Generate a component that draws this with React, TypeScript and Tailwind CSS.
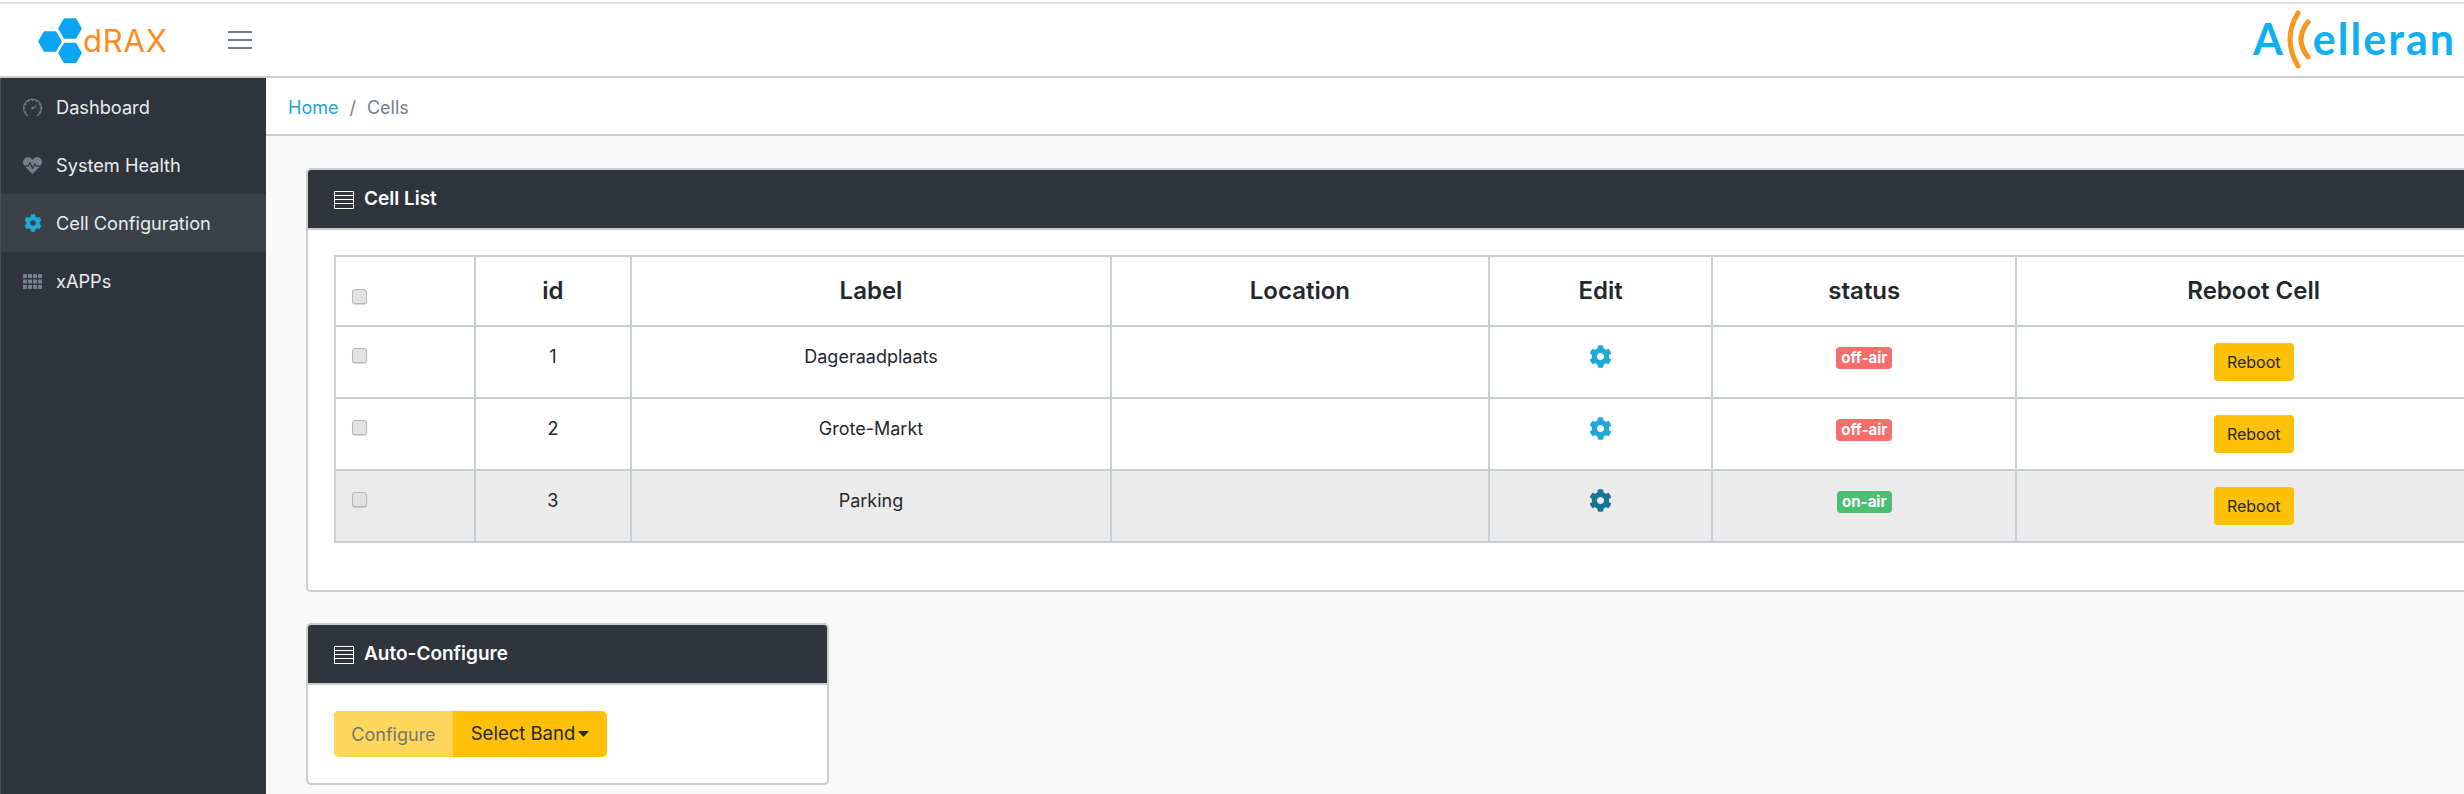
import React from "react";
import { FaCog, FaHeartbeat } from "react-icons/fa";
import { SlSpeedometer } from "react-icons/sl";

const TableIcon = () => (
  <svg width="20" height="18" viewBox="0 0 20 18" className="shrink-0">
    <path d="M.5.5h19v17H.5z" fill="none" stroke="#fff" />
    <path d="M0 4.5h20M0 8.5h20M0 12.5h20" stroke="#fff" />
  </svg>
);

const Grid = () => (
  <svg width="19" height="15" viewBox="0 0 19 15" fill="#73818f">
    {[0, 5.5, 11].map((y) => [0, 5, 10, 15].map((x) => <rect key={`${x}-${y}`} x={x} y={y} width="4" height="4" rx="0.5" />))}
  </svg>
);

const Hex = ({ x, y }: { x: number; y: number }) => (
  <polygon
    transform={`translate(${x} ${y})`}
    points="-11,0 -5.5,-9.5 5.5,-9.5 11,0 5.5,9.5 -5.5,9.5"
    fill="#0aa5f5"
    stroke="#0aa5f5"
    strokeWidth="1.5"
    strokeLinejoin="round"
  />
);

const Card = ({ title, className, children }: { title: string; className: string; children: React.ReactNode }) => (
  <section className={`shrink-0 rounded-[5px] border-2 border-[#c8ced3] bg-white ${className}`}>
    <div className="flex h-[60px] items-center gap-[10px] rounded-t-[3px] border-b-2 border-[#c8ced3] bg-[#30343c] pl-[26px] pt-[1px] text-[19px] font-semibold text-white">
      <TableIcon />
      {title}
    </div>
    {children}
  </section>
);

const widths = [140, 157, 481, 379, 224, 305, 476];
const heads = ["id", "Label", "Location", "Edit", "status", "Reboot Cell"];
const rows = [
  { id: 1, label: "Dageraadplaats", on: false },
  { id: 2, label: "Grote-Markt", on: false },
  { id: 3, label: "Parking", on: true },
];

const Check = () => (
  <input
    type="checkbox"
    className="block h-[15px] w-[15px] appearance-none rounded-[3px] border border-[#b5b5b5] bg-[#e2e2e2] shadow-[0_1px_1px_rgba(0,0,0,0.15)]"
  />
);

const nav = [
  { icon: <SlSpeedometer size={19} color="#73818f" />, label: "Dashboard" },
  { icon: <FaHeartbeat size={19} color="#73818f" />, label: "System Health" },
  { icon: <FaCog size={18} color="#20a8d8" />, label: "Cell Configuration", active: true },
  { icon: <Grid />, label: "xAPPs" },
];

export default function App() {
  return (
    <div className="flex h-[794px] w-[2464px] flex-col overflow-hidden bg-[#f9f9fa] font-['Inter',sans-serif] text-[18px] text-[#23282c]">
      <header className="flex h-[78px] shrink-0 items-center border-b-2 border-[#c8ced3] bg-white pt-[2px]">
        <div className="relative flex h-full w-full items-center border-t-2 border-[#dfe0e6]">
          <svg width="46" height="46" viewBox="0 0 46 46" className="ml-[38px] shrink-0">
            <Hex x={12} y={24.5} />
            <Hex x={32} y={11.5} />
            <Hex x={32} y={36} />
          </svg>
          <span className="ml-[-1px] text-[31px] leading-none tracking-[0.8px] text-[#ff8a1e]">dRAX</span>
          <svg width="24" height="20" viewBox="0 0 24 20" className="ml-[60px] shrink-0">
            <path d="M0 2h24M0 10h24M0 18h24" stroke="#73818f" strokeWidth="2" />
          </svg>
          <div className="ml-auto mr-[8px] flex items-center pb-[3px] font-['Lato',sans-serif] text-[43px] font-bold leading-none tracking-[2px] text-[#0db0f2]">
            <span>A</span>
            <svg width="28" height="60" viewBox="0 0 28 60" className="shrink-0">
              <path d="M13 4Q-3 30 13 57M23 13Q9 30.500 23 48" fill="none" stroke="#f9981e" strokeWidth="5" strokeLinecap="round" />
            </svg>
            <span>elleran</span>
          </div>
        </div>
      </header>
      <div className="flex min-h-0 flex-1">
        <nav className="w-[266px] shrink-0 border-l border-[#4a4f57] bg-[#30343c] text-[18.2px] text-white">
          {nav.map((n) => (
            <div key={n.label} className={`flex h-[58px] items-center ${n.active ? "bg-[#3a4248]" : ""}`}>
              <span className="flex w-[55px] justify-center pl-[8px]">{n.icon}</span>
              <span className="pt-[1px] text-[#e9ecef]">{n.label}</span>
            </div>
          ))}
        </nav>
        <main className="min-w-0 flex-1 overflow-hidden">
          <div className="flex h-[58px] items-center gap-[11px] border-b-2 border-[#c8ced3] bg-white pl-[22px] pt-[2px]">
            <span className="text-[#20a8d8]">Home</span>
            <span className="text-[#73818f]">/</span>
            <span className="text-[#73818f]">Cells</span>
          </div>
          <div className="flex flex-col gap-[31px] pl-[40px] pt-[32px]">
            <Card title="Cell List" className="w-[2214px]">
              <div className="px-[26px] pb-[47px] pt-[25px]">
                <table className="table-fixed border-collapse">
                  <colgroup>
                    {widths.map((w, i) => (
                      <col key={i} style={{ width: w }} />
                    ))}
                  </colgroup>
                  <thead>
                    <tr className="h-[70px]">
                      <th className="border-2 border-[#c8ced3] pl-[16px] pt-[10px] align-middle">
                        <Check />
                      </th>
                      {heads.map((h) => (
                        <th key={h} className="border-2 border-[#c8ced3] text-center align-middle text-[24px] font-semibold">
                          {h}
                        </th>
                      ))}
                    </tr>
                  </thead>
                  <tbody>
                    {rows.map((r) => (
                      <tr key={r.id} className={`h-[72px] ${r.on ? "bg-[#ebebeb]" : ""}`}>
                        <td className="border-2 border-[#c8ced3] pl-[16px] pt-[21px] align-top">
                          <Check />
                        </td>
                        <td className="border-2 border-[#c8ced3] pt-[16px] text-center align-top">{r.id}</td>
                        <td className="border-2 border-[#c8ced3] pt-[16px] text-center align-top">{r.label}</td>
                        <td className="border-2 border-[#c8ced3]"></td>
                        <td className="border-2 border-[#c8ced3] pt-[18px] align-top">
                          <FaCog size={23} color={r.on ? "#167495" : "#20a8d8"} className="mx-auto block" />
                        </td>
                        <td className="border-2 border-[#c8ced3] pt-[16px] text-center align-top">
                          <span
                            className={`inline-block rounded-[4px] px-[5px] py-[1px] text-[15px] font-bold leading-[20px] text-white ${
                              r.on ? "bg-[#4dbd74]" : "bg-[#f86c6b]"
                            }`}
                          >
                            {r.on ? "on-air" : "off-air"}
                          </span>
                        </td>
                        <td className="border-2 border-[#c8ced3] pt-[16px] text-center align-top">
                          <button className="h-[38px] w-[80px] rounded-[4px] bg-[#ffc107] text-[16px] text-[#23282c]">Reboot</button>
                        </td>
                      </tr>
                    ))}
                  </tbody>
                </table>
              </div>
            </Card>
            <Card title="Auto-Configure" className="w-[523px]">
              <div className="p-[26px]">
                <div className="flex h-[46px] w-[273px] overflow-hidden rounded-[5px] bg-[#ffc107]">
                  <span className="flex w-[119px] items-center justify-center bg-[#ffd65c] text-[#73756f]">Configure</span>
                  <span className="flex flex-1 items-center justify-center gap-[3px] text-[18.5px] text-[#23282c]">
                    Select Band
                    <svg width="11" height="6" viewBox="0 0 11 6">
                      <path d="M0 0h11L5.5 6z" fill="#23282c" />
                    </svg>
                  </span>
                </div>
              </div>
            </Card>
          </div>
        </main>
      </div>
    </div>
  );
}
